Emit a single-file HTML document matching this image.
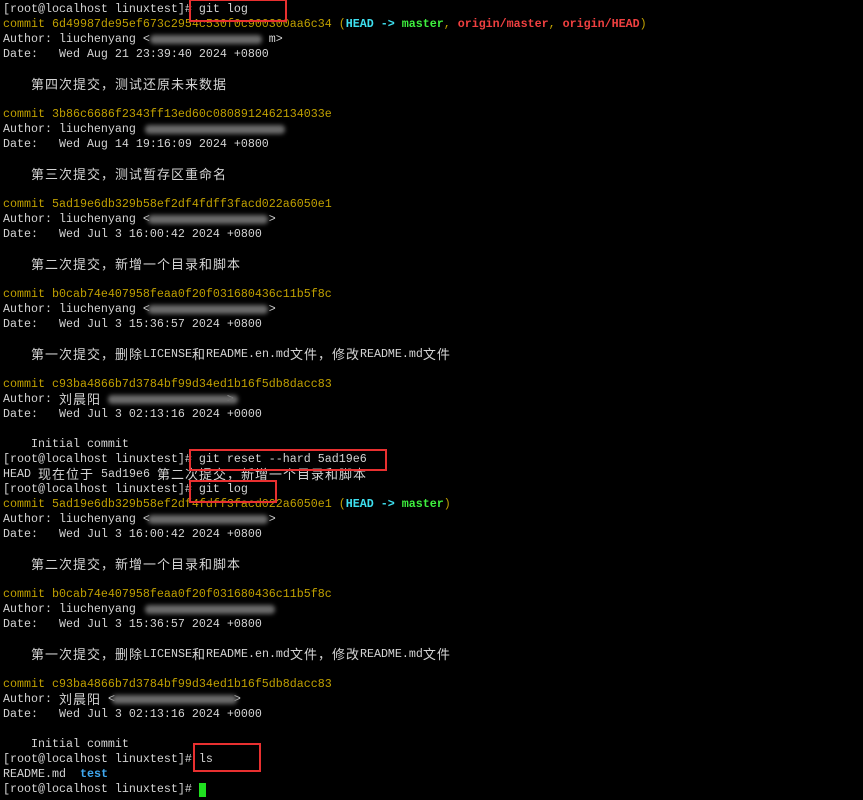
<!DOCTYPE html>
<html><head><meta charset="utf-8"><style>
html,body{margin:0;padding:0;background:#000;width:863px;height:800px;overflow:hidden;}
#t{position:absolute;left:3px;top:2px;font-family:"Liberation Mono",monospace;font-size:11.67px;color:#d4d4d4;}
#t div{height:15px;line-height:15px;white-space:pre;overflow:visible;}
.c{font-family:"Noto Sans CJK SC","WenQuanYi Zen Hei",sans-serif;font-size:13px;letter-spacing:1px;line-height:15px;vertical-align:top;display:inline-block;height:15px;position:relative;top:-1px;}
.y{color:#c0a000}
.h{color:#3ee0f0;font-weight:bold}
.g{color:#3ef03e;font-weight:bold}
.r{color:#f04040;font-weight:bold}
.b{color:#3fa8f0;font-weight:bold}
.box{position:absolute;border:2px solid #e83030;}
.bl{position:absolute;height:9px;background:#6a6a6a;filter:blur(2px);border-radius:4px;}
.cur{position:absolute;left:199px;top:783px;width:7px;height:14px;background:#20e020;}
</style></head><body>
<div id="t">
<div>[root@localhost linuxtest]# git log</div>
<div><span class="y">commit 6d49987de95ef673c2954c530f0c900300aa6c34 (</span><span class="h">HEAD -&gt; </span><span class="g">master</span><span class="y">, </span><span class="r">origin/master</span><span class="y">, </span><span class="r">origin/HEAD</span><span class="y">)</span></div>
<div>Author: liuchenyang &lt;                 m&gt;</div>
<div>Date:   Wed Aug 21 23:39:40 2024 +0800</div>
<div></div>
<div>    <span class="c">第四次提交，测试还原未来数据</span></div>
<div></div>
<div><span class="y">commit 3b86c6686f2343ff13ed60c0808912462134033e</span></div>
<div>Author: liuchenyang </div>
<div>Date:   Wed Aug 14 19:16:09 2024 +0800</div>
<div></div>
<div>    <span class="c">第三次提交，测试暂存区重命名</span></div>
<div></div>
<div><span class="y">commit 5ad19e6db329b58ef2df4fdff3facd022a6050e1</span></div>
<div>Author: liuchenyang &lt;                 &gt;</div>
<div>Date:   Wed Jul 3 16:00:42 2024 +0800</div>
<div></div>
<div>    <span class="c">第二次提交，新增一个目录和脚本</span></div>
<div></div>
<div><span class="y">commit b0cab74e407958feaa0f20f031680436c11b5f8c</span></div>
<div>Author: liuchenyang &lt;                 &gt;</div>
<div>Date:   Wed Jul 3 15:36:57 2024 +0800</div>
<div></div>
<div>    <span class="c">第一次提交，删除</span>LICENSE<span class="c">和</span>README.en.md<span class="c">文件，修改</span>README.md<span class="c">文件</span></div>
<div></div>
<div><span class="y">commit c93ba4866b7d3784bf99d34ed1b16f5db8dacc83</span></div>
<div>Author: <span class="c">刘晨阳</span>                  &gt;</div>
<div>Date:   Wed Jul 3 02:13:16 2024 +0000</div>
<div></div>
<div>    Initial commit</div>
<div>[root@localhost linuxtest]# git reset --hard 5ad19e6</div>
<div>HEAD <span class="c">现在位于</span> 5ad19e6 <span class="c">第二次提交，新增一个目录和脚本</span></div>
<div>[root@localhost linuxtest]# git log</div>
<div><span class="y">commit 5ad19e6db329b58ef2df4fdff3facd022a6050e1 (</span><span class="h">HEAD -&gt; </span><span class="g">master</span><span class="y">)</span></div>
<div>Author: liuchenyang &lt;                 &gt;</div>
<div>Date:   Wed Jul 3 16:00:42 2024 +0800</div>
<div></div>
<div>    <span class="c">第二次提交，新增一个目录和脚本</span></div>
<div></div>
<div><span class="y">commit b0cab74e407958feaa0f20f031680436c11b5f8c</span></div>
<div>Author: liuchenyang </div>
<div>Date:   Wed Jul 3 15:36:57 2024 +0800</div>
<div></div>
<div>    <span class="c">第一次提交，删除</span>LICENSE<span class="c">和</span>README.en.md<span class="c">文件，修改</span>README.md<span class="c">文件</span></div>
<div></div>
<div><span class="y">commit c93ba4866b7d3784bf99d34ed1b16f5db8dacc83</span></div>
<div>Author: <span class="c">刘晨阳</span> &lt;                 &gt;</div>
<div>Date:   Wed Jul 3 02:13:16 2024 +0000</div>
<div></div>
<div>    Initial commit</div>
<div>[root@localhost linuxtest]# ls</div>
<div>README.md  <span class="b">test</span></div>
<div>[root@localhost linuxtest]# </div>
</div>
<div class="bl" style="left:150px;top:35px;width:112px"></div>
<div class="bl" style="left:145px;top:125px;width:140px"></div>
<div class="bl" style="left:148px;top:215px;width:120px"></div>
<div class="bl" style="left:148px;top:305px;width:120px"></div>
<div class="bl" style="left:108px;top:395px;width:130px"></div>
<div class="bl" style="left:148px;top:515px;width:120px"></div>
<div class="bl" style="left:145px;top:605px;width:130px"></div>
<div class="bl" style="left:112px;top:695px;width:125px"></div>
<div class="box" style="left:189px;top:-1px;width:94px;height:19px"></div>
<div class="box" style="left:189px;top:449px;width:194px;height:18px"></div>
<div class="box" style="left:189px;top:480px;width:84px;height:19px"></div>
<div class="box" style="left:193px;top:743px;width:64px;height:25px"></div>
<div class="cur"></div>
</body></html>
